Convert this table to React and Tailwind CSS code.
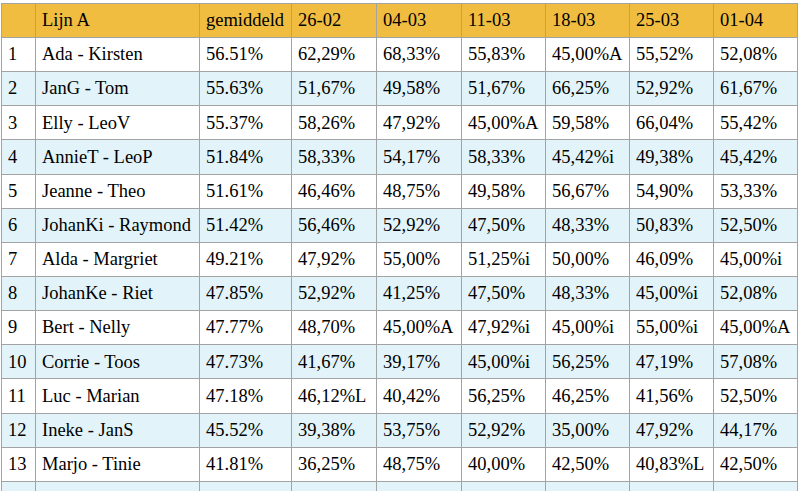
import React from "react";

const header = ["", "Lijn A", "gemiddeld", "26-02", "04-03", "11-03", "18-03", "25-03", "01-04"];
const rows = [
  ["1", "Ada - Kirsten", "56.51%", "62,29%", "68,33%", "55,83%", "45,00%A", "55,52%", "52,08%"],
  ["2", "JanG - Tom", "55.63%", "51,67%", "49,58%", "51,67%", "66,25%", "52,92%", "61,67%"],
  ["3", "Elly - LeoV", "55.37%", "58,26%", "47,92%", "45,00%A", "59,58%", "66,04%", "55,42%"],
  ["4", "AnnieT - LeoP", "51.84%", "58,33%", "54,17%", "58,33%", "45,42%i", "49,38%", "45,42%"],
  ["5", "Jeanne - Theo", "51.61%", "46,46%", "48,75%", "49,58%", "56,67%", "54,90%", "53,33%"],
  ["6", "JohanKi - Raymond", "51.42%", "56,46%", "52,92%", "47,50%", "48,33%", "50,83%", "52,50%"],
  ["7", "Alda - Margriet", "49.21%", "47,92%", "55,00%", "51,25%i", "50,00%", "46,09%", "45,00%i"],
  ["8", "JohanKe - Riet", "47.85%", "52,92%", "41,25%", "47,50%", "48,33%", "45,00%i", "52,08%"],
  ["9", "Bert - Nelly", "47.77%", "48,70%", "45,00%A", "47,92%i", "45,00%i", "55,00%i", "45,00%A"],
  ["10", "Corrie - Toos", "47.73%", "41,67%", "39,17%", "45,00%i", "56,25%", "47,19%", "57,08%"],
  ["11", "Luc - Marian", "47.18%", "46,12%L", "40,42%", "56,25%", "46,25%", "41,56%", "52,50%"],
  ["12", "Ineke - JanS", "45.52%", "39,38%", "53,75%", "52,92%", "35,00%", "47,92%", "44,17%"],
  ["13", "Marjo - Tinie", "41.81%", "36,25%", "48,75%", "40,00%", "42,50%", "40,83%L", "42,50%"],
  ["", "", "", "", "", "", "", "", ""],
];

const widths = [34, 164, 92, 85, 85, 84, 84, 84, 84];

export default function App() {
  return (
    <div className="w-[800px] h-[491px] overflow-hidden bg-white pt-[3px] pl-[1px]" style={{ fontFamily: '"Liberation Serif", "Times New Roman", serif' }}>
      <table className="table-fixed border-collapse border border-[#a3a3a3] text-[18.5px] text-black leading-none">
        <colgroup>
          {widths.map((w, i) => (
            <col key={i} style={{ width: w }} />
          ))}
        </colgroup>
        <thead>
          <tr className="bg-[#f0bd41]">
            {header.map((h, i) => (
              <th key={i} className="h-[34px] border border-[#a3a3a3] px-[6px] text-left font-normal whitespace-nowrap">
                {h}
              </th>
            ))}
          </tr>
        </thead>
        <tbody>
          {rows.map((r, ri) => (
            <tr key={ri} className={ri % 2 === 1 ? "bg-[#e2f4f9]" : "bg-white"}>
              {r.map((c, ci) => (
                <td key={ci} className="h-[34.15px] border border-[#a3a3a3] px-[6px] text-left whitespace-nowrap">
                  {c}
                </td>
              ))}
            </tr>
          ))}
        </tbody>
      </table>
    </div>
  );
}
